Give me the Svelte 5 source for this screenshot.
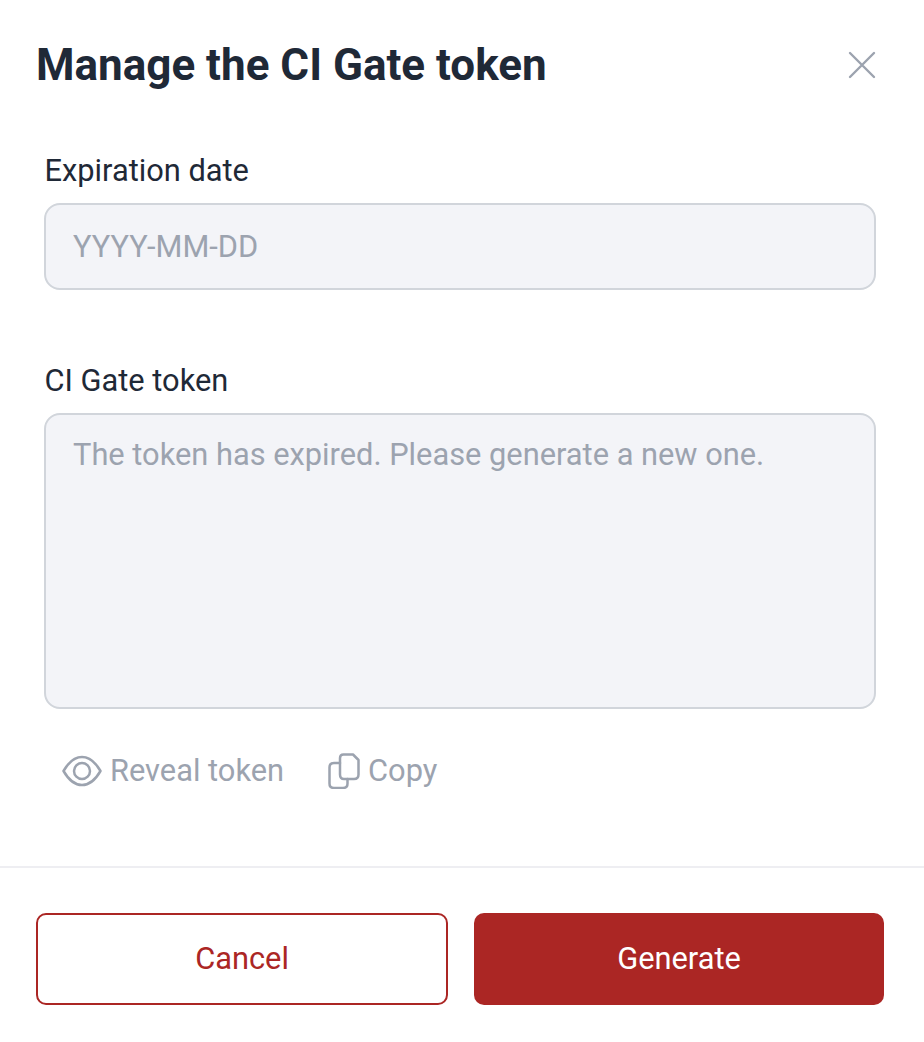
<script>
  let date = $state('');
  let token = $state('');
</script>

<div class="modal">
  <header class="head">
    <h1>Manage the CI Gate token</h1>
    <button class="close" aria-label="Close">
      <svg width="28" height="28" viewBox="0 0 28 28" fill="none" stroke="#9ca3af" stroke-width="2.4" stroke-linecap="round"><path d="M2 2 L26 26 M26 2 L2 26"/></svg>
    </button>
  </header>
  <div class="body">
    <label class="field first">
      <span class="label">Expiration date</span>
      <input class="box date" placeholder="YYYY-MM-DD" disabled bind:value={date} />
    </label>
    <label class="field second">
      <span class="label">CI Gate token</span>
      <textarea class="box area" placeholder="The token has expired. Please generate a new one." disabled bind:value={token}></textarea>
    </label>
    <div class="actions">
      <button class="link">
        <svg width="40" height="32" viewBox="0 0 40 32" fill="none" stroke="#9ca3af" stroke-width="2.5" stroke-linejoin="round"><path d="M1.5 16 C7 6.500 13 2 20 2 C27 2 33 6.500 38.500 16 C33 25.500 27 30 20 30 C13 30 7 25.500 1.500 16 Z"/><circle cx="20" cy="16" r="8"/></svg>
        Reveal token
      </button>
      <button class="link">
        <svg width="32" height="36" viewBox="0 0 32 36" fill="none" stroke="#9ca3af" stroke-width="2.500" stroke-linejoin="round" stroke-linecap="round"><path d="M15.500 1.500 H25 L30.500 7 V21.500 Q30.500 26 26 26 H16 Q12 26 12 21.500 V5 Q12 1.500 15.500 1.500 Z"/><path d="M12 10 H6 Q1.500 10 1.500 14.500 V30.500 Q1.500 35 6 35 H15 Q19.500 35 19.500 30.500 V26"/></svg>
        Copy
      </button>
    </div>
  </div>
  <footer class="foot">
    <button class="btn outline">Cancel</button>
    <button class="btn solid">Generate</button>
  </footer>
</div>

<style>
  :global(body) { margin: 0; background: #fff; }
  .modal { width: 924px; height: 1042px; box-sizing: border-box; font-family: Roboto, "Liberation Sans", sans-serif; color: #1f2937; display: flex; flex-direction: column; }
  .head { display: flex; justify-content: space-between; align-items: center; padding: 40px 48px 0 36px; height: 50px; box-sizing: content-box; }
  h1 { margin: 0; font-size: 44px; font-weight: 700; line-height: 50px; color: #1f2937; }
  .close { padding: 0; border: 0; background: none; display: flex; }
  .body { padding: 0 48px 0 44px; flex: 1; }
  .field { display: flex; flex-direction: column; }
  .first { margin-top: 63px; }
  .second { margin-top: 73px; }
  .label { font-size: 30.8px; line-height: 36px; margin-left: 0.5px; margin-bottom: 14px; font-weight: 400; color: #1f2937; }
  .box { box-sizing: border-box; width: 832px; background: #f3f4f8; border: 2px solid #d1d5db; border-radius: 16px; font: inherit; font-size: 30.8px; padding: 0 27px; outline: none; resize: none; display: block; margin: 0; }
  .box::placeholder { color: #9ca3af; opacity: 1; }
  .date { height: 87px; }
  .area { height: 296px; padding-top: 22px; line-height: 36px; }
  .actions { display: flex; gap: 44px; margin-top: 44px; padding-left: 18px; }
  .link { display: flex; align-items: center; gap: 8px; padding: 0; border: 0; background: none; font: inherit; font-size: 30.8px; line-height: 36px; color: #9ca3af; }
  .foot { border-top: 2px solid #eeeef2; padding: 45px 40px 37px 36px; display: flex; gap: 26px; }
  .btn { height: 92px; width: 412px; box-sizing: border-box; border-radius: 10px; font: inherit; font-size: 30.8px; padding: 0 0 2px; }
  .outline { background: #fff; border: 2px solid #ab2624; color: #ab2624; }
  .solid { background: #ab2624; border: 0; color: #fff; width: 410px; font-weight: 400; }
</style>
